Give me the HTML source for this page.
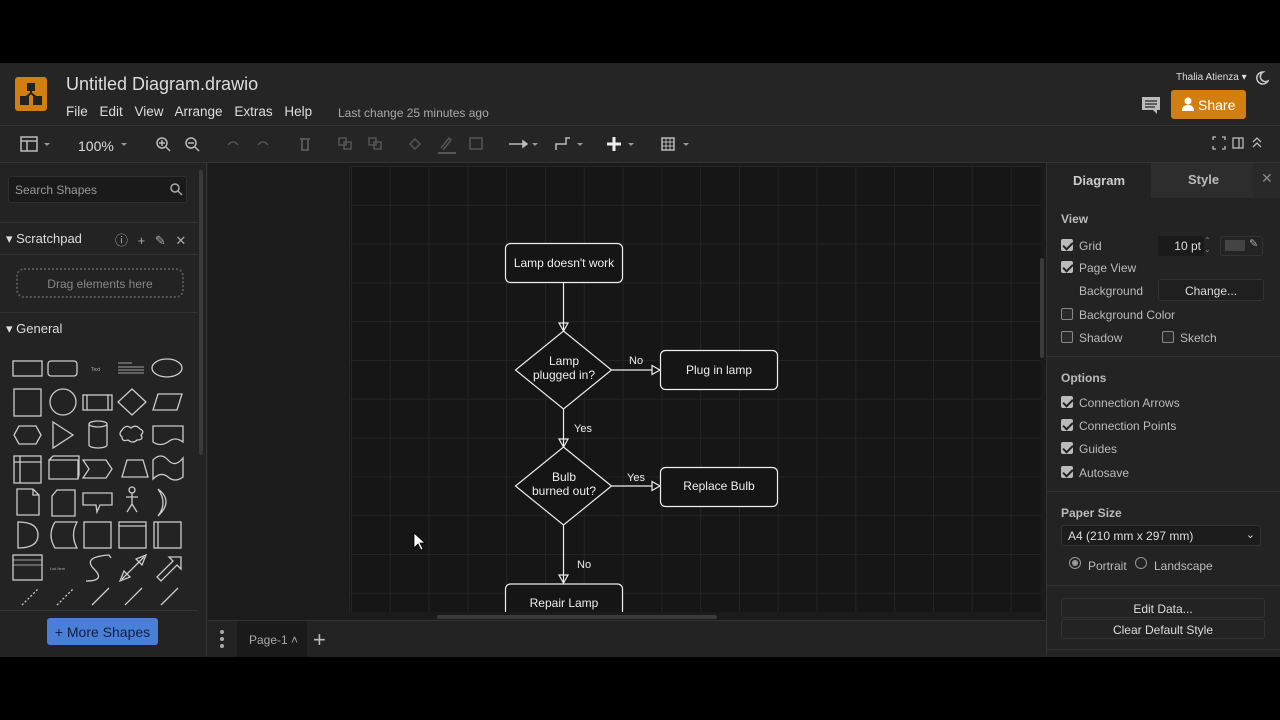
<!DOCTYPE html>
<html><head><meta charset="utf-8"><style>
*{box-sizing:border-box;margin:0;padding:0}
body{width:1280px;height:720px;background:#000;position:relative;overflow:hidden;font-family:"Liberation Sans",sans-serif;color:#ddd}
.a{position:absolute}
.t{font-size:13px;color:#ccc}
.cb{position:absolute;width:12px;height:12px;border:1px solid #888;border-radius:2px;background:#2a2a2a}
.cb.on{background:#bbb;border-color:#bbb}
.cb.on:after{content:"";position:absolute;left:3px;top:0px;width:4px;height:8px;border:solid #222;border-width:0 2px 2px 0;transform:rotate(45deg)}
.lbl{position:absolute;font-size:12px;color:#bbb}
.hd{position:absolute;font-size:12px;font-weight:bold;color:#bbb}
</style></head><body>
<div class="a" style="left:0;top:63px;width:1280px;height:594px;background:#232323"></div>
<!-- header -->
<div class="a" style="left:0;top:63px;width:1280px;height:63px;background:#252525;border-bottom:1px solid #333"></div>
<div class="a" style="left:15px;top:77px;width:32px;height:34px;background:#d37f0f;border-radius:3px"></div>
<svg class="a" style="left:15px;top:77px" width="32" height="34"><g fill="#222" stroke="#222" stroke-width="2"><rect x="13" y="7" width="6" height="6"/><rect x="6" y="20" width="7" height="7"/><rect x="19" y="20" width="7" height="7"/><path d="M16 12v4M16 16l-6 5M16 16l6 5" fill="none"/></g></svg>
<div class="a" style="left:66px;top:74px;font-size:18px;color:#ddd">Untitled Diagram.drawio</div>
<div class="a" style="left:66px;top:104px;font-size:13.5px;color:#ddd;word-spacing:8px">File Edit View Arrange Extras Help</div>
<div class="a" style="left:338px;top:106px;font-size:12px;color:#aaa">Last change 25 minutes ago</div>
<div class="a" style="left:1176px;top:72px;font-size:10px;color:#ddd">Thalia Atienza ▾</div>
<svg class="a" style="left:1253px;top:70px" width="16" height="16"><path d="M10 2a6 6 0 1 0 5 9a5 5 0 0 1-5-9z" fill="none" stroke="#ccc" stroke-width="1.5"/></svg>
<svg class="a" style="left:1141px;top:96px" width="20" height="19"><path d="M1 1h18v13h-3v4l-4-4H1z" fill="#bbb"/><path d="M4 5h12M4 8h12M4 11h10" stroke="#252525" stroke-width="1.3"/></svg>
<div class="a" style="left:1171px;top:90px;width:75px;height:29px;background:#d37f0f;border-radius:3px;color:#fff;font-size:14px;padding:7px 0 0 27px">Share</div>
<svg class="a" style="left:1181px;top:97px" width="14" height="14"><circle cx="7" cy="4" r="3.5" fill="#fff"/><path d="M1 14c0-5 3-6 6-6s6 1 6 6z" fill="#fff"/></svg>
<!-- toolbar -->
<div class="a" style="left:0;top:126px;width:1280px;height:37px;background:#252525;border-bottom:1px solid #333"></div>
<svg class="a" style="left:0;top:126px" width="700" height="36" fill="none" stroke="#bbb" stroke-width="1.5">
<rect x="21" y="11" width="16" height="14"/><path d="M21 15h16M27 15v10"/><path d="M44 17l3 3 3-3z" fill="#999" stroke="none"/>
<path d="M121 17l3 3 3-3z" fill="#999" stroke="none"/>
<circle cx="162" cy="17" r="5"/><path d="M166 21l4 4M159 17h6M162 14v6"/>
<circle cx="191" cy="17" r="5"/><path d="M195 21l4 4M188 17h6"/>
<g stroke="#555"><path d="M228 19q5-6 10 0M268 19q-5-6-10 0"/><path d="M300 13h10M302 13v11h6v-11" stroke-width="2"/><rect x="339" y="12" width="7" height="7"/><rect x="344" y="16" width="7" height="7"/><rect x="369" y="12" width="7" height="7"/><rect x="374" y="16" width="7" height="7"/><path d="M410 18l5-5 5 5-5 5z"/><path d="M441 22l8-10 2 2-8 10" /><path d="M438 27h18" stroke-width="2"/><rect x="470" y="12" width="12" height="11"/></g>
<path d="M509 18h14" /><path d="M523 15l4 3-4 3z" fill="#bbb"/><path d="M532 17l3 3 3-3z" fill="#999" stroke="none"/>
<path d="M556 24v-6h10v-6h4"/><path d="M577 17l3 3 3-3z" fill="#999" stroke="none"/>
<path d="M614 11v14M607 18h14" stroke-width="3" stroke="#eee"/><path d="M628 17l3 3 3-3z" fill="#999" stroke="none"/>
<rect x="662" y="12" width="12" height="12"/><path d="M662 16h12M662 20h12M666 12v12M670 12v12" stroke-width="1"/><path d="M683 17l3 3 3-3z" fill="#999" stroke="none"/>
</svg>
<div class="a" style="left:78px;top:138px;font-size:14px;color:#ddd">100%</div>
<svg class="a" style="left:1205px;top:126px" width="75" height="36" fill="none" stroke="#bbb" stroke-width="1.3"><path d="M8 14v-3h3M17 11h3v3M20 20v3h-3M11 23h-3v-3"/><rect x="28" y="12" width="10" height="10"/><path d="M34 12v10"/><path d="M48 16l4-4 4 4M48 21l4-4 4 4"/></svg>
<!-- left panel -->
<div class="a" style="left:0;top:163px;width:207px;height:494px;background:#232323;border-right:1px solid #333"></div>
<div class="a" style="left:199px;top:170px;width:4px;height:285px;background:#3a3a3a;border-radius:2px"></div>
<div class="a" style="left:8px;top:176px;width:179px;height:27px;background:#1a1a1a;border:1px solid #2e2e2e;border-radius:3px;font-size:12px;color:#999;padding:6px 0 0 6px">Search Shapes</div>
<svg class="a" style="left:169px;top:182px" width="14" height="14" fill="none" stroke="#aaa" stroke-width="1.5"><circle cx="6" cy="6" r="4"/><path d="M9 9l4 4"/></svg>
<div class="a" style="left:0;top:222px;width:198px;height:1px;background:#333"></div>
<div class="a" style="left:6px;top:231px;font-size:13px;color:#ddd">▾ Scratchpad</div>
<div class="a" style="left:115px;top:230px;font-size:13px;color:#aaa;word-spacing:6px">ⓘ + ✎ ✕</div>
<div class="a" style="left:0;top:254px;width:198px;height:1px;background:#333"></div>
<div class="a" style="left:16px;top:268px;width:168px;height:30px;border:2px dotted #555;border-radius:8px;font-size:12px;color:#888;text-align:center;padding-top:7px">Drag elements here</div>
<div class="a" style="left:0;top:312px;width:198px;height:1px;background:#333"></div>
<div class="a" style="left:6px;top:321px;font-size:13px;color:#ddd">▾ General</div>
<svg class="a" style="left:0;top:352px" width="198" height="255" fill="none" stroke="#ccc" stroke-width="1.3">
<rect x="13" y="9" width="29" height="15"/><rect x="48" y="9" width="29" height="15" rx="3"/><text x="91" y="19" font-size="5" fill="#aaa" stroke="none">Text</text><path d="M118 11h14M118 15h26M118 18h26M118 21h26" stroke-width="0.7"/><ellipse cx="167" cy="16" rx="15" ry="9"/>
<rect x="14" y="37" width="27" height="27"/><circle cx="63" cy="50" r="13"/><rect x="83" y="43" width="29" height="15"/><path d="M87 43v15M108 43v15"/><path d="M132 37l14 13-14 13-14-13z"/><path d="M158 42h24l-5 16h-24z"/>
<path d="M19 74h17l5 9-5 9h-17l-5-9z"/><path d="M53 70l20 13-20 13z"/><path d="M89 72v21a9 3 0 0 0 18 0v-21a9 3 0 0 0-18 0a9 3 0 0 0 18 0"/><path d="M122 78q4-6 9-2q5-4 9 1q5 2 1 6q3 5-4 5q-4 4-9 0q-6 2-6-3q-4-3 0-7z"/><path d="M153 74h30v16q-8-6-15 0q-8 5-15 0z"/>
<rect x="14" y="104" width="27" height="27"/><path d="M14 110h27M20 104v27"/><path d="M49 108h29v19h-29zM49 108l4-4h26v19l-1 4"/><path d="M83 108h23l6 9-6 9h-23l6-9z"/><path d="M122 125l5-17h16l5 17z"/><path d="M153 108q8-8 15 0t15-2v19q-8 6-15 0t-15 2z"/>
<path d="M17 137h16l6 6v20h-22z M33 137v6h6"/><path d="M57 138h18v26h-23v-20z"/><path d="M83 141h29v12h-12l-3 7-1-7h-13z"/><circle cx="132" cy="138" r="3"/><path d="M132 141v11M126 145h12M132 152l-5 8M132 152l5 8"/><path d="M158 137q16 12 0 27q10-13 0-27"/>
<path d="M18 170q20 0 20 13t-20 13z"/><path d="M55 170h22q-7 13 0 26h-22q-8-13 0-26"/><rect x="84" y="170" width="27" height="26"/><rect x="119" y="170" width="27" height="26"/><path d="M119 174h27"/><rect x="154" y="170" width="27" height="26"/><path d="M158 170v26"/>
<rect x="13" y="203" width="29" height="25"/><path d="M13 208h29M13 213h29" stroke-width="0.7"/><text x="50" y="218" font-size="4" fill="#aaa" stroke="none">List Item</text><path d="M86 229q20 0 8-12t15-14l2 3"/><path d="M122 227l22-22M120 229l4-10 6 6zM146 203l-4 10-6-6z"/><path d="M157 225l16-16-4-4h12v12l-4-4-16 16z"/>
<g stroke-dasharray="2 2"><path d="M22 253l16-16M57 253l16-16"/></g><path d="M92 253l17-17M125 253l17-17M161 253l17-17"/>
</svg>
<div class="a" style="left:0;top:610px;width:198px;height:1px;background:#333"></div>
<div class="a" style="left:47px;top:618px;width:111px;height:27px;background:#4a7fd8;border-radius:3px;color:#102040;font-size:14px;text-align:center;padding-top:6px">+ More Shapes</div>
<!-- canvas -->
<div class="a" style="left:208px;top:163px;width:838px;height:457px;background:#1b1b1b"></div>
<div class="a" style="left:349px;top:166px;width:692px;height:446px;background:#161616;border-left:1px solid #262626;
background-image:linear-gradient(90deg,#242424 1px,transparent 1px),linear-gradient(#242424 1px,transparent 1px);background-size:38.8px 38.8px;background-position:1px 0,0 0"></div>
<div class="a" style="left:1040px;top:258px;width:4px;height:100px;background:#3a3a3a;border-radius:2px"></div>
<div class="a" style="left:437px;top:615px;width:280px;height:4px;background:#3a3a3a;border-radius:2px"></div>
<svg class="a" style="left:349px;top:166px" width="692" height="446" font-family="Liberation Sans" font-size="12" fill="#eee">
<g stroke="#eee" stroke-width="1.2" fill="none">
<rect x="156.5" y="77.5" width="117" height="39" rx="5" fill="#151515"/>
<path d="M214.5 116v49"/><path d="M210 157h9l-4.5 8z"/>
<path d="M214.5 165l48 39-48 39-48-39z" fill="#151515"/>
<path d="M262.5 204h41"/><path d="M303 199.5v9l8-4.5z"/>
<rect x="311.5" y="184.5" width="117" height="39" rx="5" fill="#151515"/>
<path d="M214.5 243v38"/><path d="M210 273h9l-4.5 8z"/>
<path d="M214.5 281l48 39-48 39-48-39z" fill="#151515"/>
<path d="M262.5 320h41"/><path d="M303 315.5v9l8-4.5z"/>
<rect x="311.5" y="301.5" width="117" height="39" rx="5" fill="#151515"/>
<path d="M214.5 359v58"/><path d="M210 409h9l-4.5 8z"/>
<path d="M156.5 450v-27a5 5 0 0 1 5-5h107a5 5 0 0 1 5 5v27" fill="#151515"/>
</g>
<g text-anchor="middle">
<text x="215" y="101">Lamp doesn't work</text>
<text x="215" y="199">Lamp</text><text x="215" y="213">plugged in?</text>
<text x="370" y="208">Plug in lamp</text>
<text x="215" y="315">Bulb</text><text x="215" y="329">burned out?</text>
<text x="370" y="324">Replace Bulb</text>
<text x="215" y="441">Repair Lamp</text>
</g>
<g font-size="11"><text x="280" y="198">No</text><text x="225" y="266">Yes</text><text x="278" y="315">Yes</text><text x="228" y="402">No</text></g>
</svg>
<svg class="a" style="left:412px;top:532px" width="14" height="20"><path d="M2 1v15l4-4 3 6 2-1-3-6h5z" fill="#fff" stroke="#000" stroke-width="0.8"/></svg>
<!-- bottom bar -->
<div class="a" style="left:208px;top:620px;width:838px;height:37px;background:#222;border-top:1px solid #333"></div>
<div class="a" style="left:237px;top:621px;width:70px;height:36px;background:#1a1a1a"></div>
<svg class="a" style="left:215px;top:628px" width="14" height="22" fill="#aaa"><circle cx="7" cy="4" r="2"/><circle cx="7" cy="11" r="2"/><circle cx="7" cy="18" r="2"/></svg>
<div class="a" style="left:249px;top:633px;font-size:12px;color:#aaa">Page-1 ˄</div>
<div class="a" style="left:313px;top:627px;font-size:22px;color:#bbb;font-weight:300">+</div>
<!-- right panel -->
<div class="a" style="left:1046px;top:163px;width:234px;height:494px;background:#232323;border-left:1px solid #333"></div>
<div class="a" style="left:1151px;top:163px;width:102px;height:35px;background:#2d2d2d"></div>
<div class="a" style="left:1253px;top:163px;width:27px;height:35px;background:#292929"></div>
<div class="a" style="left:1073px;top:173px;font-size:13px;font-weight:bold;color:#ccc">Diagram</div>
<div class="a" style="left:1188px;top:172px;font-size:13px;font-weight:bold;color:#bbb">Style</div>
<div class="a" style="left:1261px;top:170px;font-size:14px;color:#888">✕</div>
<div class="hd" style="left:1061px;top:212px">View</div>
<div class="cb on" style="left:1061px;top:239px"></div><div class="lbl" style="left:1079px;top:239px">Grid</div>
<div class="a" style="left:1158px;top:236px;width:46px;height:20px;background:#1a1a1a;font-size:12px;color:#ddd;text-align:right;padding:3px 3px 0 0">10 pt</div>
<div class="a" style="left:1204px;top:236px;font-size:8px;color:#888;line-height:9px">⌃<br>⌄</div>
<div class="a" style="left:1220px;top:236px;width:43px;height:20px;border:1px solid #333;border-radius:3px"></div>
<div class="a" style="left:1225px;top:240px;width:20px;height:11px;background:#444"></div>
<div class="a" style="left:1249px;top:237px;font-size:11px;color:#aaa">✎</div>
<div class="cb on" style="left:1061px;top:261px"></div><div class="lbl" style="left:1079px;top:261px">Page View</div>
<div class="lbl" style="left:1079px;top:284px">Background</div>
<div class="a" style="left:1158px;top:279px;width:106px;height:22px;border:1px solid #333;border-radius:3px;font-size:12px;color:#ddd;text-align:center;padding-top:4px;background:#1f1f1f">Change...</div>
<div class="cb" style="left:1061px;top:308px"></div><div class="lbl" style="left:1079px;top:308px">Background Color</div>
<div class="cb" style="left:1061px;top:331px"></div><div class="lbl" style="left:1079px;top:331px">Shadow</div>
<div class="cb" style="left:1162px;top:331px"></div><div class="lbl" style="left:1180px;top:331px">Sketch</div>
<div class="a" style="left:1047px;top:356px;width:233px;height:1px;background:#333"></div>
<div class="hd" style="left:1061px;top:371px">Options</div>
<div class="cb on" style="left:1061px;top:396px"></div><div class="lbl" style="left:1079px;top:396px">Connection Arrows</div>
<div class="cb on" style="left:1061px;top:419px"></div><div class="lbl" style="left:1079px;top:419px">Connection Points</div>
<div class="cb on" style="left:1061px;top:442px"></div><div class="lbl" style="left:1079px;top:442px">Guides</div>
<div class="cb on" style="left:1061px;top:466px"></div><div class="lbl" style="left:1079px;top:466px">Autosave</div>
<div class="a" style="left:1047px;top:491px;width:233px;height:1px;background:#333"></div>
<div class="hd" style="left:1061px;top:506px">Paper Size</div>
<div class="a" style="left:1061px;top:525px;width:200px;height:21px;background:#1c1c1c;border:1px solid #333;border-radius:3px;font-size:12px;color:#ddd;padding:3px 0 0 6px">A4 (210 mm x 297 mm)<span style="position:absolute;right:5px;top:2px;font-size:11px">⌄</span></div>
<div class="a" style="left:1069px;top:557px;width:12px;height:12px;border:1px solid #999;border-radius:50%;"><div style="margin:2px;width:6px;height:6px;border-radius:50%;background:#999"></div></div>
<div class="lbl" style="left:1088px;top:559px">Portrait</div>
<div class="a" style="left:1135px;top:557px;width:12px;height:12px;border:1px solid #999;border-radius:50%"></div>
<div class="lbl" style="left:1154px;top:559px">Landscape</div>
<div class="a" style="left:1047px;top:585px;width:233px;height:1px;background:#333"></div>
<div class="a" style="left:1061px;top:598px;width:204px;height:20px;border:1px solid #333;border-radius:3px;font-size:12px;color:#ddd;text-align:center;padding-top:3px">Edit Data...</div>
<div class="a" style="left:1061px;top:619px;width:204px;height:20px;border:1px solid #333;border-radius:3px;font-size:12px;color:#ddd;text-align:center;padding-top:3px">Clear Default Style</div>
<div class="a" style="left:1047px;top:649px;width:233px;height:1px;background:#333"></div>
</body></html>
